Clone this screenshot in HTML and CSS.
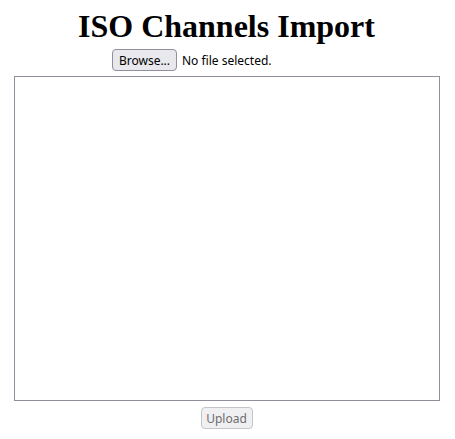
FILE: index.html
```html
<!DOCTYPE html>
<html>
<head>
<meta charset="utf-8">
<link rel="stylesheet" href="styles.css">
</head>
<body>
<h1 class="title">ISO Channels Import</h1>
<form class="form">
  <div class="file-row">
    <button type="button" class="btn btn-browse">Browse...</button>
    <span class="file-label">No file selected.</span>
  </div>
  <textarea class="area"></textarea>
  <div class="actions">
    <button type="button" class="btn btn-disabled" disabled>Upload</button>
  </div>
</form>
</body>
</html>
```

FILE: styles.css
```css
html, body {
  margin: 0;
  padding: 0;
  background: #ffffff;
}
body {
  padding: 8px 9px 8px 7px;
  font-family: "Liberation Serif", serif;
}
.title {
  margin: 0;
  font-family: "Liberation Serif", serif;
  font-weight: bold;
  font-size: 32px;
  line-height: 37px;
  text-align: center;
  color: #000;
}
.form {
  display: flex;
  flex-direction: column;
  align-items: center;
}
.file-row {
  display: flex;
  align-items: center;
  gap: 5px;
  margin-top: 4px;
  align-self: flex-start;
  padding-left: 105px;
  font-family: "Noto Sans", sans-serif;
  font-size: 12px;
}
.btn {
  box-sizing: border-box;
  height: 22px;
  padding: 0;
  font-family: "Noto Sans", sans-serif;
  font-size: 12px;
  color: #000;
  background: #e9e9ed;
  border: 1px solid #8f8f9d;
  border-radius: 4px;
  text-align: center;
}
.btn-browse {
  width: 65px;
}
.btn-disabled {
  color: #6d6d6d;
  background: #f0f0f3;
  border-color: #c4c4cc;
  width: 52px;
}
.file-label {
  color: #000;
}
.area {
  box-sizing: border-box;
  width: 426px;
  height: 325px;
  margin: 5px 0 0 0;
  border: 1px solid #8f8f9d;
  border-radius: 0;
  resize: none;
  background: #fff;
}
.actions {
  margin-top: 6px;
  display: flex;
  justify-content: center;
}
```
